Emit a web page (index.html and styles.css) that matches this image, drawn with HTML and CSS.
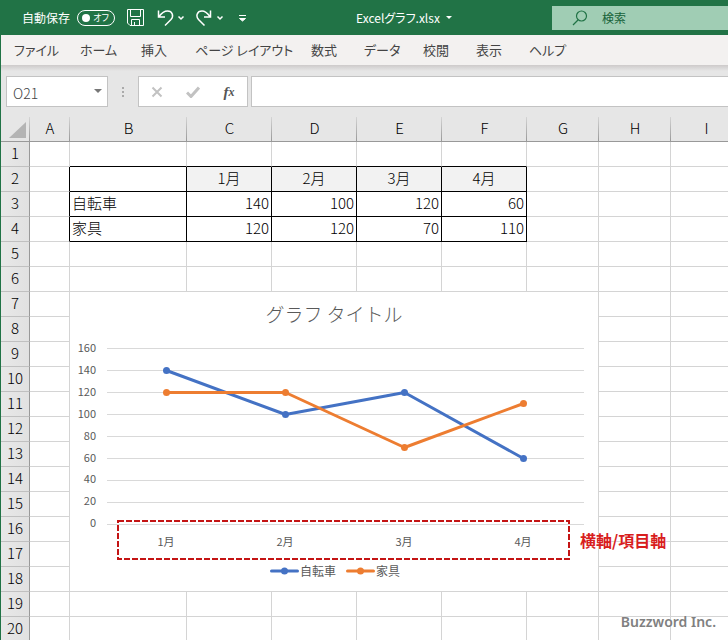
FILE: index.html
```html
<!DOCTYPE html>
<html lang="ja">
<head>
<meta charset="utf-8">
<meta name="viewport" content="width=device-width, initial-scale=1">
<title>Excelグラフ.xlsx</title>
<link rel="stylesheet" href="styles.css">
</head>
<body>
<div class="app">
  <header class="titlebar">
    <div class="quick">
      <label class="autosave" for="autosave">自動保存</label>
      <span class="switch"><input type="checkbox" id="autosave"><span class="knob"></span><span class="state">オフ</span></span>
      <button class="tool save" type="button" aria-label="上書き保存">
        <svg width="17" height="17" viewBox="0 0 17 17"><path d="M.5.5h16v16H3L.5 14zM3.500.5v7h10v-7M4.500 16.500v-6h8v6M7.500 13v3.500"/></svg>
      </button>
      <button class="tool undo" type="button" aria-label="元に戻す">
        <svg width="28" height="18" viewBox="0 0 28 18"><path class="bold" d="M1.500 1.500v6.500h6.500M2 7.500C5 3.500 8 2 10.500 2c5 0 6.500 5 3.500 8.500L8 16.500"/><path class="bold" d="M21.500 7.500l2.500 2.500 2.500-2.500"/></svg>
      </button>
      <button class="tool redo" type="button" aria-label="やり直し">
        <svg width="28" height="18" viewBox="0 0 28 18"><path class="bold" d="M14.500 1.500v6.500H8M14 7.500C11 3.500 8.500 2 6 2 1 2-.5 7 2.500 10.500l6 6"/><path class="bold" d="M21.500 7.500l2.500 2.500 2.500-2.500"/></svg>
      </button>
      <button class="tool more" type="button" aria-label="カスタマイズ">
        <svg width="9" height="8" viewBox="0 0 9 8"><path d="M1 1.500h7M1.500 4.500h6l-3 2.500z"/></svg>
      </button>
    </div>
    <button class="filename" type="button">Excelグラフ.xlsx<span class="caret"></span></button>
    <label class="search">
      <svg width="16" height="16" viewBox="0 0 16 16"><circle cx="9.500" cy="6" r="5"/><path d="M6 10l-5 5"/></svg>
      <input type="search" placeholder="検索" aria-label="検索">
    </label>
  </header>

  <nav class="tabs">
    <a href="#">ファイル</a><a href="#">ホーム</a><a href="#">挿入</a><a href="#">ページ レイアウト</a><a href="#">数式</a><a href="#">データ</a><a href="#">校閲</a><a href="#">表示</a><a href="#">ヘルプ</a>
  </nav>

  <div class="formulabar">
    <div class="namebox">
      <input type="text" value="O21" aria-label="名前ボックス">
      <button type="button" aria-label="一覧"><span class="caret"></span></button>
    </div>
    <span class="grip"><i></i><i></i><i></i></span>
    <div class="actions">
      <button type="button" aria-label="キャンセル"><svg width="12" height="12" viewBox="0 0 12 12"><path d="M1.500 1.500l9 9M10.500 1.500l-9 9"/></svg></button>
      <button type="button" aria-label="入力"><svg width="14" height="12" viewBox="0 0 14 12"><path class="tick" d="M1 6.500l4 4 8-9"/></svg></button>
      <button type="button" class="fx" aria-label="関数の挿入">f<span>x</span></button>
    </div>
    <input class="formula" type="text" aria-label="数式バー">
  </div>

  <main class="sheet">
    <table class="grid">
      <colgroup><col class="w-head"><col class="w-a"><col class="w-b"><col class="w-data"><col class="w-data"><col class="w-data"><col class="w-data"><col class="w-std"><col class="w-std"><col></colgroup>
      <thead>
        <tr><th class="corner"><svg width="18" height="18" viewBox="0 0 18 18"><path d="M17 1v16H0z"/></svg></th><th>A</th><th>B</th><th>C</th><th>D</th><th>E</th><th>F</th><th>G</th><th>H</th><th>I</th></tr>
      </thead>
      <tbody>
        <tr><th>1</th><td></td><td class="over"></td><td class="over"></td><td class="over"></td><td class="over"></td><td class="over"></td><td></td><td></td><td></td></tr>
        <tr><th>2</th><td class="before"></td><td class="box"></td><td class="box month">1月</td><td class="box month">2月</td><td class="box month">3月</td><td class="box month">4月</td><td></td><td></td><td></td></tr>
        <tr><th>3</th><td class="before"></td><td class="box">自転車</td><td class="box num">140</td><td class="box num">100</td><td class="box num">120</td><td class="box num">60</td><td></td><td></td><td></td></tr>
        <tr><th>4</th><td class="before"></td><td class="box">家具</td><td class="box num">120</td><td class="box num">120</td><td class="box num">70</td><td class="box num">110</td><td></td><td></td><td></td></tr>
        <tr><th>5</th><td></td><td></td><td></td><td></td><td></td><td></td><td></td><td></td><td></td></tr>
        <tr><th>6</th><td></td><td></td><td></td><td></td><td></td><td></td><td></td><td></td><td></td></tr>
        <tr><th>7</th><td></td><td></td><td></td><td></td><td></td><td></td><td></td><td></td><td></td></tr>
        <tr><th>8</th><td></td><td></td><td></td><td></td><td></td><td></td><td></td><td></td><td></td></tr>
        <tr><th>9</th><td></td><td></td><td></td><td></td><td></td><td></td><td></td><td></td><td></td></tr>
        <tr><th>10</th><td></td><td></td><td></td><td></td><td></td><td></td><td></td><td></td><td></td></tr>
        <tr><th>11</th><td></td><td></td><td></td><td></td><td></td><td></td><td></td><td></td><td></td></tr>
        <tr><th>12</th><td></td><td></td><td></td><td></td><td></td><td></td><td></td><td></td><td></td></tr>
        <tr><th>13</th><td></td><td></td><td></td><td></td><td></td><td></td><td></td><td></td><td></td></tr>
        <tr><th>14</th><td></td><td></td><td></td><td></td><td></td><td></td><td></td><td></td><td></td></tr>
        <tr><th>15</th><td></td><td></td><td></td><td></td><td></td><td></td><td></td><td></td><td></td></tr>
        <tr><th>16</th><td></td><td></td><td></td><td></td><td></td><td></td><td></td><td></td><td></td></tr>
        <tr><th>17</th><td></td><td></td><td></td><td></td><td></td><td></td><td></td><td></td><td></td></tr>
        <tr><th>18</th><td></td><td></td><td></td><td></td><td></td><td></td><td></td><td></td><td></td></tr>
        <tr><th>19</th><td></td><td></td><td></td><td></td><td></td><td></td><td></td><td></td><td></td></tr>
        <tr><th>20</th><td></td><td></td><td></td><td></td><td></td><td></td><td></td><td></td><td></td></tr>
      </tbody>
    </table>

    <figure class="chart">
      <figcaption>グラフ タイトル</figcaption>
      <svg class="plot" width="528" height="222" viewBox="0 0 528 222">
        <path class="lines" d="M37 8.500h477M37 30.500h477M37 52.500h477M37 74.500h477M37 96.500h477M37 118.500h477M37 140.500h477M37 162.500h477M37 184.500h477"/>
        <g class="scale">
          <text x="26" y="12">160</text><text x="26" y="34">140</text><text x="26" y="56">120</text><text x="26" y="78">100</text><text x="26" y="100">80</text><text x="26" y="122">60</text><text x="26" y="143">40</text><text x="26" y="165">20</text><text x="26" y="187">0</text>
        </g>
        <g class="bike"><path d="M96.500 30.500l119 44 119-22 119 66"/><circle cx="96.500" cy="30.500" r="3.500"/><circle cx="215.500" cy="74.500" r="3.500"/><circle cx="334.500" cy="52.500" r="3.500"/><circle cx="453.500" cy="118.500" r="3.500"/></g>
        <g class="furniture"><path d="M96.500 52.500h119l119 55 119-44"/><circle cx="96.500" cy="52.500" r="3.500"/><circle cx="215.500" cy="52.500" r="3.500"/><circle cx="334.500" cy="107.500" r="3.500"/><circle cx="453.500" cy="63.500" r="3.500"/></g>
        <g class="months"><text x="96" y="206">1月</text><text x="215" y="206">2月</text><text x="334" y="206">3月</text><text x="453" y="206">4月</text></g>
        <rect class="callout" x="48" y="181" width="451" height="38"/>
      </svg>
      <div class="legend">
        <span><svg class="bike" width="29" height="8" viewBox="0 0 29 8"><path d="M1.500 4h26"/><circle cx="14.500" cy="4" r="3.500"/></svg>自転車</span>
        <span><svg class="furniture" width="29" height="8" viewBox="0 0 29 8"><path d="M1.500 4h26"/><circle cx="14.500" cy="4" r="3.500"/></svg>家具</span>
      </div>
    </figure>
    <strong class="note">横軸/項目軸</strong>
  </main>
  <div class="credit">Buzzword Inc.</div>
</div>
</body>
</html>
```
FILE: styles.css
```css
* { box-sizing: border-box; }

body {
  margin: 0;
  font-family: "Noto Sans CJK JP", sans-serif;
  color: #222;
}

button, input {
  margin: 0;
  padding: 0;
  border: 0;
  background: none;
  font: inherit;
  color: inherit;
}

.app {
  position: relative;
  display: flex;
  flex-direction: column;
  height: 100vh;
  overflow: hidden;
  border-left: 1px solid #217346;
  background: #e6e6e6;
}

.caret {
  display: inline-block;
  border: 4px solid transparent;
  border-top-color: currentColor;
  border-bottom: 0;
}

/* Title bar */
.titlebar {
  flex: none;
  display: grid;
  grid-template-columns: 355px 1fr 176px;
  align-items: center;
  height: 35px;
  background: #217346;
  color: #fff;
  font-size: 12px;
  line-height: 20px;
}

.quick {
  display: flex;
  align-items: center;
  padding-left: 21px;
}

.switch {
  position: relative;
  display: flex;
  align-items: center;
  justify-content: space-between;
  width: 38px;
  height: 16px;
  margin: 0 12px 0 7px;
  padding: 0 5px 0 4px;
  border: 1px solid #fff;
  border-radius: 8px;
  font-size: 9px;
  font-feature-settings: "palt";
}

.switch input {
  position: absolute;
  inset: 0;
  width: 100%;
  height: 100%;
  opacity: 0;
}

.knob {
  width: 8px;
  height: 8px;
  border-radius: 50%;
  background: #fff;
}

.tool { display: flex; }
.save { margin-right: 13px; }
.undo { margin-right: 11px; }
.redo { margin-right: 14px; }

.tool svg {
  fill: none;
  stroke: #fff;
  stroke-width: 1;
}

.tool .bold { stroke-width: 1.5; }
.more svg { fill: #fff; }

.filename {
  display: flex;
  align-items: center;
  gap: 6px;
  font-size: 12px;
  font-feature-settings: "palt";
}

.filename .caret { border-width: 3px 3px 0; }

.search {
  display: flex;
  align-items: center;
  gap: 14px;
  height: 24px;
  padding-left: 20px;
  background: #a0cdb4;
  color: #217346;
}

.search svg {
  flex: none;
  fill: none;
  stroke: #217346;
  stroke-width: 1.2;
}

.search input { width: 100%; min-width: 0; }
.search input::placeholder { color: #17633a; opacity: 1; }

/* Ribbon tabs */
.tabs {
  flex: none;
  display: grid;
  grid-template-columns: 66px 61px 54px 116px 53px 59px 53px 53px auto;
  align-items: center;
  height: 30px;
  padding-left: 13px;
  background: #f3f1f0;
  font-size: 13px;
  line-height: 20px;
  font-feature-settings: "palt";
}

.tabs a {
  color: #444;
  text-decoration: none;
  white-space: nowrap;
}

/* Formula bar */
.formulabar {
  flex: none;
  display: flex;
  height: 52px;
  padding: 11px 0 10px 5px;
  background: linear-gradient(#cdcaca, #e6e6e6 6px);
}

.namebox, .actions, .formula {
  border: 1px solid #c3c3c3;
  background: #fff;
}

.namebox {
  display: flex;
  width: 102px;
  padding: 3px 5px 0 6px;
  color: #444;
  font-size: 14px;
  font-weight: 300;
}

.namebox input { flex: 1; min-width: 0; }
.namebox .caret { display: block; margin-bottom: 4px; color: #777; }

.grip {
  display: flex;
  flex-direction: column;
  align-items: center;
  justify-content: center;
  gap: 2px;
  width: 30px;
}

.grip i {
  width: 2px;
  height: 2px;
  background: #aaa;
}

.actions {
  display: flex;
  width: 110px;
  margin-right: 3px;
}

.actions button {
  display: flex;
  flex: 1;
  align-items: center;
  justify-content: center;
}

.actions svg {
  fill: none;
  stroke: #c2c2c2;
  stroke-width: 2;
}

.actions .tick { stroke-width: 3; }

.actions .fx {
  color: #555;
  font: italic bold 15px/20px "Liberation Serif", serif;
}

.fx span { font-size: 12px; }

.formula {
  flex: 1;
  min-width: 0;
  border-right: 0;
  padding: 0 8px;
  font-size: 14px;
}

/* Worksheet */
.sheet {
  position: relative;
  flex: 1;
  min-height: 0;
  overflow: hidden;
  background: #fff;
}

.grid {
  width: 100%;
  min-width: 741px;
  table-layout: fixed;
  border-spacing: 0;
  color: #000;
  font-size: 15px;
  font-weight: 300;
  line-height: 22px;
}

.w-head { width: 29px; }
.w-a { width: 40px; }
.w-b { width: 117px; }
.w-data { width: 85px; }
.w-std { width: 72px; }

.grid th, .grid td {
  height: 25px;
  padding: 0 2px 2px;
  border: solid #d4d4d4;
  border-width: 0 1px 1px 0;
}

.grid th {
  padding: 0 0 2px;
  font-weight: 300;
  background: #e6e6e6;
}

.grid thead th {
  border-right: 0;
  border-bottom-color: #999;
  background: linear-gradient(#d4d4d4, #999) right / 1px 100% no-repeat #e6e6e6;
}

.grid tbody th {
  border-right-color: #999;
  border-bottom-color: #c0c0c0;
  background: linear-gradient(90deg, #e8e8e8, #e1e1e1);
}

.grid .corner svg {
  display: block;
  margin: 3px 0 0 8px;
  fill: #b4b4b4;
}

.grid .over { border-bottom-color: #000; }
.grid .before { border-right-color: #000; }
.grid .box { border-color: #000; }
.grid .month { background: #f2f2f2; text-align: center; }
.grid .num { text-align: right; }

/* Chart floating over the cells */
.chart {
  position: absolute;
  top: 175px;
  left: 69px;
  width: 528px;
  height: 299px;
  margin: 0;
  background: #fff;
  color: #595959;
}

.chart figcaption {
  height: 48px;
  font-size: 19px;
  font-weight: 300;
  line-height: 44px;
  text-align: center;
}

.plot { display: block; }
.plot text { fill: #595959; font-size: 11px; }
.scale { text-anchor: end; }
.months { text-anchor: middle; }
.lines { stroke: #d9d9d9; }

.bike path, .furniture path {
  fill: none;
  stroke-width: 3;
  stroke-linecap: round;
  stroke-linejoin: round;
}

.bike path { stroke: #4472c4; }
.bike circle { fill: #4472c4; }
.furniture path { stroke: #ed7d31; }
.furniture circle { fill: #ed7d31; }

.callout {
  fill: none;
  stroke: #c41414;
  stroke-width: 2;
  stroke-dasharray: 6 2;
}

.legend {
  display: flex;
  justify-content: center;
  gap: 10px;
  height: 18px;
  padding-left: 2px;
  font-size: 12px;
  line-height: 18px;
}

.legend span {
  display: flex;
  align-items: center;
  gap: 1px;
}

.note {
  position: absolute;
  top: 411px;
  left: 579px;
  color: #d81e1e;
  font-size: 16px;
  line-height: 24px;
  text-shadow: 0 0 2px #fff;
}

.credit {
  position: absolute;
  right: 12px;
  bottom: 8px;
  color: #808080;
  font: 600 14px/20px "Noto Sans", sans-serif;
  text-shadow: 0 0 2px #fff;
}
```
